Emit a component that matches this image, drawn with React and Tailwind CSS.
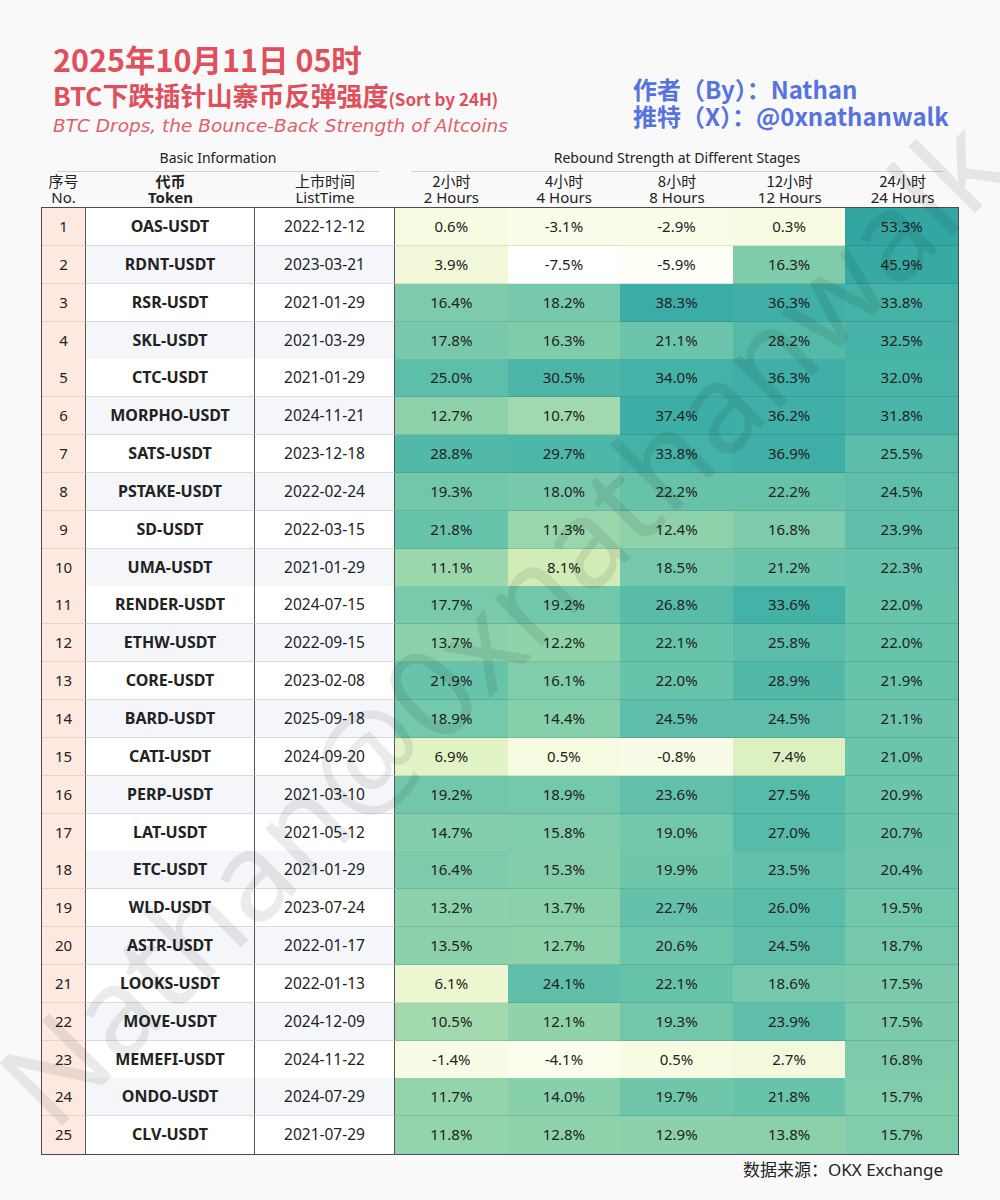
const rows = [
  ["OAS-USDT", "2022-12-12", [0.6, -3.1, -2.9, 0.3, 53.3]],
  ["RDNT-USDT", "2023-03-21", [3.9, -7.5, -5.9, 16.3, 45.9]],
  ["RSR-USDT", "2021-01-29", [16.4, 18.2, 38.3, 36.3, 33.8]],
  ["SKL-USDT", "2021-03-29", [17.8, 16.3, 21.1, 28.2, 32.5]],
  ["CTC-USDT", "2021-01-29", [25.0, 30.5, 34.0, 36.3, 32.0]],
  ["MORPHO-USDT", "2024-11-21", [12.7, 10.7, 37.4, 36.2, 31.8]],
  ["SATS-USDT", "2023-12-18", [28.8, 29.7, 33.8, 36.9, 25.5]],
  ["PSTAKE-USDT", "2022-02-24", [19.3, 18.0, 22.2, 22.2, 24.5]],
  ["SD-USDT", "2022-03-15", [21.8, 11.3, 12.4, 16.8, 23.9]],
  ["UMA-USDT", "2021-01-29", [11.1, 8.1, 18.5, 21.2, 22.3]],
  ["RENDER-USDT", "2024-07-15", [17.7, 19.2, 26.8, 33.6, 22.0]],
  ["ETHW-USDT", "2022-09-15", [13.7, 12.2, 22.1, 25.8, 22.0]],
  ["CORE-USDT", "2023-02-08", [21.9, 16.1, 22.0, 28.9, 21.9]],
  ["BARD-USDT", "2025-09-18", [18.9, 14.4, 24.5, 24.5, 21.1]],
  ["CATI-USDT", "2024-09-20", [6.9, 0.5, -0.8, 7.4, 21.0]],
  ["PERP-USDT", "2021-03-10", [19.2, 18.9, 23.6, 27.5, 20.9]],
  ["LAT-USDT", "2021-05-12", [14.7, 15.8, 19.0, 27.0, 20.7]],
  ["ETC-USDT", "2021-01-29", [16.4, 15.3, 19.9, 23.5, 20.4]],
  ["WLD-USDT", "2023-07-24", [13.2, 13.7, 22.7, 26.0, 19.5]],
  ["ASTR-USDT", "2022-01-17", [13.5, 12.7, 20.6, 24.5, 18.7]],
  ["LOOKS-USDT", "2022-01-13", [6.1, 24.1, 22.1, 18.6, 17.5]],
  ["MOVE-USDT", "2024-12-09", [10.5, 12.1, 19.3, 23.9, 17.5]],
  ["MEMEFI-USDT", "2024-11-22", [-1.4, -4.1, 0.5, 2.7, 16.8]],
  ["ONDO-USDT", "2024-07-29", [11.7, 14.0, 19.7, 21.8, 15.7]],
  ["CLV-USDT", "2021-07-29", [11.8, 12.8, 12.9, 13.8, 15.7]],
];

const stages = [
  ["2小时", "2 Hours"],
  ["4小时", "4 Hours"],
  ["8小时", "8 Hours"],
  ["12小时", "12 Hours"],
  ["24小时", "24 Hours"],
];

// heatmap stops: value -> colour
const stops = [
  [-7.5, "#ffffff"],
  [-4, "#fbfdec"],
  [0, "#f7fbe3"],
  [4, "#f1f8d9"],
  [6, "#edf7d2"],
  [7, "#e1f2c5"],
  [8, "#d4edb8"],
  [10, "#a8dcae"],
  [12, "#90d3ab"],
  [16, "#80ccab"],
  [20, "#6fc6ab"],
  [24, "#60bfaa"],
  [28, "#54baa9"],
  [32, "#49b4a8"],
  [38, "#3bada6"],
  [54, "#32a7a2"],
];

const hex = (h) => [1, 3, 5].map((i) => parseInt(h.slice(i, i + 2), 16));

function heat(v) {
  if (v <= stops[0][0]) return stops[0][1];
  for (let i = 1; i < stops.length; i++) {
    const [b, cb] = stops[i];
    if (v <= b) {
      const [a, ca] = stops[i - 1];
      const t = (v - a) / (b - a);
      const x = hex(ca);
      const y = hex(cb);
      const c = x.map((n, k) => Math.round(n + (y[k] - n) * t));
      return `rgb(${c.join(",")})`;
    }
  }
  return stops[stops.length - 1][1];
}

export default function App() {
  return (
    <div className="relative w-[1000px] h-[1200px] overflow-hidden bg-[#f9f9f9] text-[#222] font-['Noto_Sans','Noto_Sans_CJK_SC',sans-serif]">
      {/* Title */}
      <div className="flex pt-[40px]">
        <div className="ml-[53px] w-[580px] text-[#df4f5c]">
          <div className="text-[30.5px] leading-[38px] font-bold font-['Noto_Sans_CJK_SC',sans-serif]">
            2025年10月11日 05时
          </div>
          <div className="font-bold font-['Noto_Sans_CJK_SC',sans-serif] leading-[33px] whitespace-nowrap">
            <span className="text-[26px]">BTC下跌插针山寨币反弹强度</span>
            <span className="text-[17px]">(Sort by 24H)</span>
          </div>
          <div className="text-[18.5px] leading-[20px] italic font-['DejaVu_Sans',sans-serif] opacity-90 whitespace-nowrap">
            BTC Drops, the Bounce-Back Strength of Altcoins
          </div>
        </div>
        <div className="pt-[35px] text-[#5773e0] text-[24px] leading-[27px] font-bold font-['Noto_Sans_CJK_SC',sans-serif] whitespace-nowrap">
          <div>作者（By）：Nathan</div>
          <div>推特（X）：@0xnathanwalk</div>
        </div>
      </div>

      {/* Table */}
      <div className="ml-[41px] w-[918px] mt-[8px] text-[15px]">
        <div className="grid grid-cols-[354px_564px] h-[27px] text-[14px] leading-[27px] text-center">
          <div className="mx-4 border-b border-[#cfcfcf]">Basic Information</div>
          <div className="mx-4 border-b border-[#cfcfcf]">Rebound Strength at Different Stages</div>
        </div>
        <div className="grid grid-cols-[45px_169px_140px_repeat(5,1fr)] h-[36px] leading-[17px] text-center items-center">
          <div className="font-['Noto_Sans_CJK_SC',sans-serif]">
            <div>序号</div>
            <div className="font-['Noto_Sans',sans-serif]">No.</div>
          </div>
          <div className="font-bold">
            <div className="font-['Noto_Sans_CJK_SC',sans-serif]">代币</div>
            <div>Token</div>
          </div>
          <div>
            <div className="font-['Noto_Sans_CJK_SC',sans-serif]">上市时间</div>
            <div>ListTime</div>
          </div>
          {stages.map(([cn, en]) => (
            <div key={en}>
              <div className="font-['Noto_Sans_CJK_SC',sans-serif]">{cn}</div>
              <div>{en}</div>
            </div>
          ))}
        </div>

        <div className="border-[1.5px] border-[#4a4a4a]">
          {rows.map(([token, date, vals], i) => (
            <div
              key={token}
              className="grid grid-cols-[44px_169px_140px_repeat(5,1fr)] h-[37.85px] leading-[37px] text-center"
            >
              <div
                className={`bg-[#fde9e0] border-r border-[#555] ${
                  i < 24 ? "border-b border-b-[#e3d6d0]" : ""
                }`}
              >
                {i + 1}
              </div>
              <div
                className={`font-bold text-[16px] border-r border-[#555] ${
                  i % 2 ? "bg-[#f5f6fa]" : "bg-white"
                } ${i < 24 ? "border-b border-b-[#dadada]" : ""}`}
              >
                {token}
              </div>
              <div
                className={`text-[15.5px] border-r border-[#555] ${
                  i % 2 ? "bg-[#f5f6fa]" : "bg-white"
                } ${i < 24 ? "border-b border-b-[#dadada]" : ""}`}
              >
                {date}
              </div>
              {vals.map((v, k) => (
                <div
                  key={k}
                  className={i < 24 ? "border-b border-black/10" : ""}
                  style={{ backgroundColor: heat(v) }}
                >
                  {v.toFixed(1)}%
                </div>
              ))}
            </div>
          ))}
        </div>

        <div className="text-right pr-[16px] text-[17px] leading-[26px] mt-[1px] font-['Noto_Sans_CJK_SC',sans-serif]">
          数据来源：<span className="font-['Noto_Sans',sans-serif]">OKX Exchange</span>
        </div>
      </div>

      {/* Watermark */}
      <div className="pointer-events-none absolute left-[500px] top-[620px] -translate-x-1/2 -translate-y-1/2 -rotate-45 whitespace-nowrap text-[124px] leading-none text-black/[0.08] font-['Noto_Sans',sans-serif]">
        Nathan@0xnathanwalk
      </div>
    </div>
  );
}
